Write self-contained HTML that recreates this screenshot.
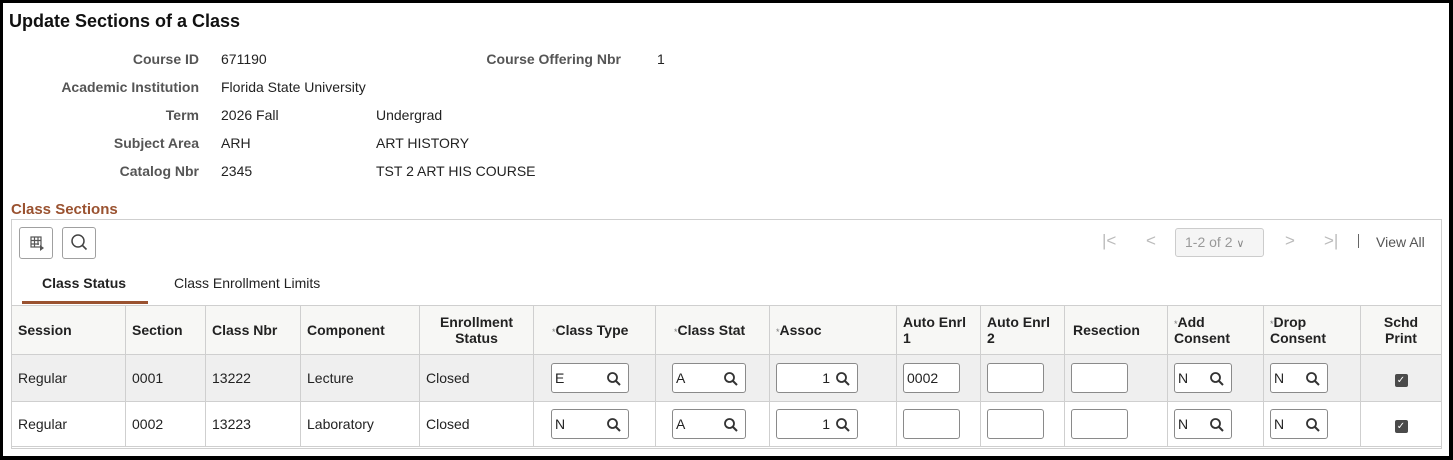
<!DOCTYPE html>
<html><head><meta charset="utf-8"><style>
*{box-sizing:border-box;margin:0;padding:0}
body{width:1453px;height:460px;overflow:hidden;background:#000;font-family:"Liberation Sans",Arial,sans-serif;font-size:14px;color:#222}
#pg{position:absolute;left:3px;top:3px;width:1446px;height:453px;background:#fff}
.a{position:absolute;white-space:nowrap}
.l{position:absolute;white-space:nowrap;font-weight:bold;color:#555;text-align:right}
.v{position:absolute;white-space:nowrap;color:#222}
.btn{position:absolute;border:1px solid #a0a0a0;border-radius:3px;background:#fff}
table{position:absolute;left:8px;top:302px;border-collapse:collapse;font-size:14px}
td,th{border:1px solid #cfcfcf;padding:0 6px;text-align:left;vertical-align:middle}
th{background:#f7f7f5;height:49px;font-weight:bold;line-height:16px;color:#222}
tr.r1 td{background:#efefef;height:47px}
tr.r2 td{background:#fff;height:45px}
.c{text-align:center}
.st{color:#777;font-size:9px;font-weight:normal;vertical-align:top;position:relative;top:2px}
.in{display:inline-block;position:relative;height:30px;border:1px solid #8a8a8a;border-radius:3px;background:#fff;vertical-align:middle;font-size:14px;line-height:28px;padding-left:3px}
.in svg{position:absolute;right:6px;top:7px}
.cb{display:inline-block;width:13px;height:13px;background:#4a4a4a;border-radius:2px;color:#fff;font-size:10px;line-height:13px;text-align:center}
</style></head><body><div id="pg">
<div class="a" style="left:6px;top:8px;font-size:18px;font-weight:bold;color:#111">Update Sections of a Class</div>
<div class="l" style="right:1250px;top:48px">Course ID</div><div class="v" style="left:218px;top:48px">671190</div>
<div class="l" style="right:828px;top:48px">Course Offering Nbr</div><div class="v" style="left:654px;top:48px">1</div>
<div class="l" style="right:1250px;top:76px">Academic Institution</div><div class="v" style="left:218px;top:76px">Florida State University</div>
<div class="l" style="right:1250px;top:104px">Term</div><div class="v" style="left:218px;top:104px">2026 Fall</div><div class="v" style="left:373px;top:104px">Undergrad</div>
<div class="l" style="right:1250px;top:132px">Subject Area</div><div class="v" style="left:218px;top:132px">ARH</div><div class="v" style="left:373px;top:132px">ART HISTORY</div>
<div class="l" style="right:1250px;top:160px">Catalog Nbr</div><div class="v" style="left:218px;top:160px">2345</div><div class="v" style="left:373px;top:160px">TST 2 ART HIS COURSE</div>
<div class="a" style="left:8px;top:198px;font-size:15px;font-weight:bold;color:#9a5230">Class Sections</div>
<div class="a" style="left:8px;top:216px;width:1431px;height:230px;border:1px solid #cfcfcf"></div>
<div class="btn" style="left:16px;top:224px;width:34px;height:32px"><svg width="34" height="30" viewBox="0 0 34 30"><g fill="none" stroke="#555" stroke-width="1.2"><rect x="11" y="9" width="10" height="10"/><path d="M11 12.5h10M11 16h8M14.5 9v10M18 9v8"/></g><path d="M20 17l4 3-4 3z" fill="#555"/></svg></div>
<div class="btn" style="left:59px;top:224px;width:34px;height:32px"><svg width="32" height="30" viewBox="0 0 32 30"><circle cx="15" cy="13" r="6" fill="none" stroke="#444" stroke-width="1.5"/><path d="M19.5 17.5l4 4" stroke="#444" stroke-width="1.6"/></svg></div>
<div class="a" style="left:1099px;top:228px;color:#bbb;font-size:17px">|&lt;</div>
<div class="a" style="left:1143px;top:228px;color:#bbb;font-size:17px">&lt;</div>
<div class="a" style="left:1172px;top:225px;width:89px;height:29px;border:1px solid #ccc;border-radius:3px;background:#f5f5f5;color:#999;font-size:14px;line-height:27px;padding-left:9px">1-2 of 2 <span style="font-size:11px;color:#888">&#8744;</span></div>
<div class="a" style="left:1282px;top:228px;color:#bbb;font-size:17px">&gt;</div>
<div class="a" style="left:1321px;top:228px;color:#bbb;font-size:17px">&gt;|</div>
<div class="a" style="left:1355px;top:231px;width:1px;height:14px;background:#666"></div>
<div class="a" style="left:1373px;top:231px;color:#555;font-size:14px">View All</div>
<div class="a" style="left:39px;top:272px;font-weight:bold;color:#222">Class Status</div>
<div class="a" style="left:171px;top:272px;color:#222">Class Enrollment Limits</div>
<div class="a" style="left:19px;top:298px;width:126px;height:3px;background:#9a5230"></div>
<table>
<tr><th style="width:114px">Session</th><th style="width:80px">Section</th><th style="width:95px">Class Nbr</th><th style="width:119px">Component</th><th class="c" style="width:114px">Enrollment<br>Status</th><th style="width:122px;padding-left:18px"><span class="st">*</span>Class Type</th><th style="width:114px;padding-left:18px"><span class="st">*</span>Class Stat</th><th style="width:127px"><span class="st">*</span>Assoc</th><th style="width:84px">Auto Enrl<br>1</th><th style="width:84px">Auto Enrl<br>2</th><th style="width:103px;padding-left:8px">Resection</th><th style="width:96px"><span class="st">*</span>Add<br>Consent</th><th style="width:97px"><span class="st">*</span>Drop<br>Consent</th><th class="c" style="width:81px">Schd<br>Print</th></tr>
<tr class="r1"><td>Regular</td><td>0001</td><td>13222</td><td>Lecture</td><td>Closed</td>
<td style="padding-left:17px"><span class="in" style="width:78px">E<svg width="16" height="16"><circle cx="6.5" cy="6.5" r="4.5" fill="none" stroke="#333" stroke-width="1.8"/><path d="M10 10l4 4" stroke="#333" stroke-width="2"/></svg></span></td>
<td style="padding-left:16px"><span class="in" style="width:74px">A<svg width="16" height="16"><circle cx="6.5" cy="6.5" r="4.5" fill="none" stroke="#333" stroke-width="1.8"/><path d="M10 10l4 4" stroke="#333" stroke-width="2"/></svg></span></td>
<td><span class="in" style="width:82px;text-align:right;padding-right:27px">1<svg width="16" height="16"><circle cx="6.5" cy="6.5" r="4.5" fill="none" stroke="#333" stroke-width="1.8"/><path d="M10 10l4 4" stroke="#333" stroke-width="2"/></svg></span></td>
<td><span class="in" style="width:57px">0002</span></td><td><span class="in" style="width:57px"></span></td><td><span class="in" style="width:57px"></span></td>
<td><span class="in" style="width:58px">N<svg width="16" height="16"><circle cx="6.5" cy="6.5" r="4.5" fill="none" stroke="#333" stroke-width="1.8"/><path d="M10 10l4 4" stroke="#333" stroke-width="2"/></svg></span></td>
<td><span class="in" style="width:58px">N<svg width="16" height="16"><circle cx="6.5" cy="6.5" r="4.5" fill="none" stroke="#333" stroke-width="1.8"/><path d="M10 10l4 4" stroke="#333" stroke-width="2"/></svg></span></td>
<td class="c"><span class="cb">✓</span></td></tr>
<tr class="r2"><td>Regular</td><td>0002</td><td>13223</td><td>Laboratory</td><td>Closed</td>
<td style="padding-left:17px"><span class="in" style="width:78px">N<svg width="16" height="16"><circle cx="6.5" cy="6.5" r="4.5" fill="none" stroke="#333" stroke-width="1.8"/><path d="M10 10l4 4" stroke="#333" stroke-width="2"/></svg></span></td>
<td style="padding-left:16px"><span class="in" style="width:74px">A<svg width="16" height="16"><circle cx="6.5" cy="6.5" r="4.5" fill="none" stroke="#333" stroke-width="1.8"/><path d="M10 10l4 4" stroke="#333" stroke-width="2"/></svg></span></td>
<td><span class="in" style="width:82px;text-align:right;padding-right:27px">1<svg width="16" height="16"><circle cx="6.5" cy="6.5" r="4.5" fill="none" stroke="#333" stroke-width="1.8"/><path d="M10 10l4 4" stroke="#333" stroke-width="2"/></svg></span></td>
<td><span class="in" style="width:57px"></span></td><td><span class="in" style="width:57px"></span></td><td><span class="in" style="width:57px"></span></td>
<td><span class="in" style="width:58px">N<svg width="16" height="16"><circle cx="6.5" cy="6.5" r="4.5" fill="none" stroke="#333" stroke-width="1.8"/><path d="M10 10l4 4" stroke="#333" stroke-width="2"/></svg></span></td>
<td><span class="in" style="width:58px">N<svg width="16" height="16"><circle cx="6.5" cy="6.5" r="4.5" fill="none" stroke="#333" stroke-width="1.8"/><path d="M10 10l4 4" stroke="#333" stroke-width="2"/></svg></span></td>
<td class="c"><span class="cb">✓</span></td></tr>
</table>
</div></body></html>
